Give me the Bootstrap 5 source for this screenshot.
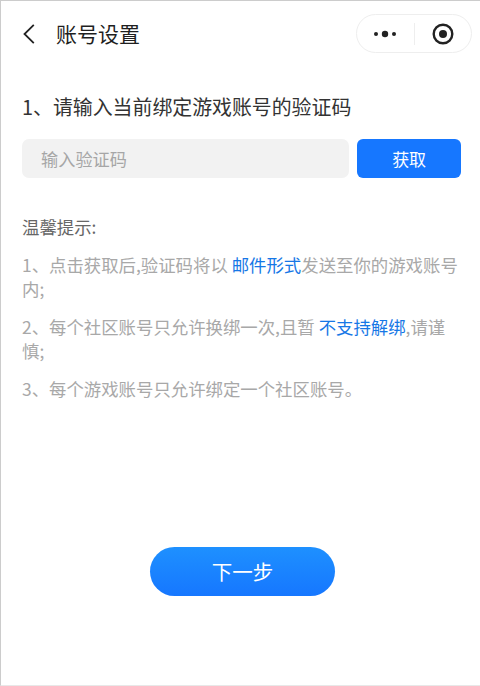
<!DOCTYPE html>
<html lang="zh-CN">
<head>
<meta charset="utf-8">
<title>账号设置</title>
<link href="https://cdn.jsdelivr.net/npm/bootstrap@5.3.0/dist/css/bootstrap.min.css" rel="stylesheet">
<style>
html,body{height:100%;margin:0}
body{background:#fff;font-family:"Noto Sans CJK SC","Liberation Sans",sans-serif}
.phone{height:686px;border-top:1px solid #ccc;border-left:1px solid #ccc;border-bottom:1px solid #e8e8e8;overflow:hidden}
.topbar{height:52px;padding:13px 8px 0 22px}
.back-ic{width:12px;height:20px;margin-right:21px;margin-top:10px}
.page-ttl{font-size:21px;line-height:40px;color:#1f1f1f;margin-top:-1px}
.capsule{width:116px;height:39px;border:1px solid #eee;border-radius:20px}
.cap-sep{width:1px;height:22px;background:#eee}
.cap-half{width:57px}
.step-ttl{font-size:19.9px;line-height:28px;color:#333;margin:40px 0 0 21px}
.code-row{margin:18px 19px 0 21px;height:39px;gap:8px}
.code-input{width:328px;height:39px;background:#f2f2f2;border:0;border-radius:7px;padding:0 19px;font-size:17.2px;color:#333;box-shadow:none}
.code-input::placeholder{color:#a6a6a6}
.code-input:focus{background:#f2f2f2;box-shadow:none}
.get-btn{width:104px;height:39px;background:#1677ff;border:0;border-radius:6px;font-size:17px;color:#fff;padding:0}
.hint-wrap{margin:37px 18px 0 21px;font-size:17.4px;line-height:24px;color:#a8a8a8}
.hint-ttl{color:#666;font-size:17.4px;margin-bottom:14px}
.hint-wrap p{margin:0 0 14px}
.hl{color:#1677e6}
.next-wrap{margin-top:132px;padding-left:4px}
.next-btn{width:185px;height:49px;border:0;border-radius:25px;background:linear-gradient(180deg,#1e90ff,#1677ff);color:#fff;font-size:20.5px;padding:0}
</style>
</head>
<body>
<div class="phone d-flex flex-column">
  <div class="topbar d-flex align-items-start">
    <svg class="back-ic" viewBox="0 0 12 20"><path d="M10.8 .8 1.5 10l9.3 9.2" fill="none" stroke="#222" stroke-width="1.8"/></svg>
    <div class="page-ttl">账号设置</div>
    <div class="capsule d-flex align-items-center ms-auto">
      <div class="cap-half d-flex justify-content-center">
        <svg width="24" height="8" viewBox="0 0 24 8"><circle cx="3" cy="4" r="2" fill="#222"/><circle cx="12" cy="4" r="3.2" fill="#222"/><circle cx="21" cy="4" r="2" fill="#222"/></svg>
      </div>
      <div class="cap-sep"></div>
      <div class="cap-half d-flex justify-content-center">
        <svg width="22" height="22" viewBox="0 0 22 22"><circle cx="11" cy="11" r="9.3" fill="none" stroke="#222" stroke-width="2.4"/><circle cx="11" cy="11" r="4" fill="#222"/></svg>
      </div>
    </div>
  </div>
  <div class="step-ttl">1、请输入当前绑定游戏账号的验证码</div>
  <div class="code-row d-flex">
    <input class="form-control code-input" type="text" placeholder="输入验证码">
    <button class="btn get-btn" type="button">获取</button>
  </div>
  <div class="hint-wrap">
    <div class="hint-ttl">温馨提示:</div>
    <p>1、点击获取后,验证码将以 <span class="hl">邮件形式</span>发送至你的游戏账号内;</p>
    <p>2、每个社区账号只允许换绑一次,且暂 <span class="hl">不支持解绑</span>,请谨慎;</p>
    <p>3、每个游戏账号只允许绑定一个社区账号。</p>
  </div>
  <div class="next-wrap d-flex justify-content-center">
    <button class="btn next-btn" type="button">下一步</button>
  </div>
</div>
<script src="https://cdn.jsdelivr.net/npm/bootstrap@5.3.0/dist/js/bootstrap.bundle.min.js"></script>
</body>
</html>
